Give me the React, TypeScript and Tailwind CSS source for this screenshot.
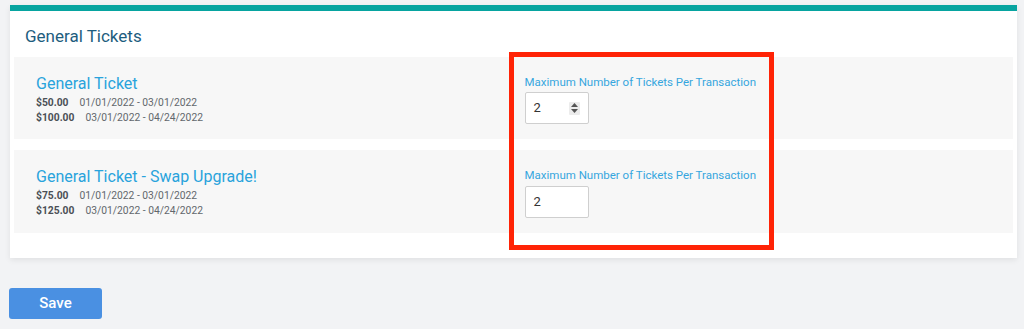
import React from 'react';

interface PriceTier {
  price: string;
  range: string;
}

interface Ticket {
  name: string;
  tiers: PriceTier[];
  maxPerTransaction: number;
  showSpinner: boolean;
}

const tickets: Ticket[] = [
  {
    name: 'General Ticket',
    tiers: [
      { price: '$50.00', range: '01/01/2022 - 03/01/2022' },
      { price: '$100.00', range: '03/01/2022 - 04/24/2022' },
    ],
    maxPerTransaction: 2,
    showSpinner: true,
  },
  {
    name: 'General Ticket - Swap Upgrade!',
    tiers: [
      { price: '$75.00', range: '01/01/2022 - 03/01/2022' },
      { price: '$125.00', range: '03/01/2022 - 04/24/2022' },
    ],
    maxPerTransaction: 2,
    showSpinner: false,
  },
];

const Spinner: React.FC = () => (
  <div className="flex flex-col items-center justify-center gap-[2px] w-[11px] h-[13px] bg-[#ececec] rounded-[1px]">
    <svg width="7" height="4" viewBox="0 0 7 4">
      <path d="M3.5 0 L7 4 L0 4 Z" fill="#555" />
    </svg>
    <svg width="7" height="4" viewBox="0 0 7 4">
      <path d="M0 0 L7 0 L3.5 4 Z" fill="#555" />
    </svg>
  </div>
);

const TicketRow: React.FC<{ ticket: Ticket; last?: boolean }> = ({ ticket, last }) => (
  <div className={`grid grid-cols-2 items-start bg-[#f7f7f7] pt-[17px] ${last ? 'pb-[15px]' : 'pb-[14px]'}`}>
    <div className="pl-[22px]">
      <div className="text-[16px] leading-[19px] text-[#29a3dc]">{ticket.name}</div>
      <div className="mt-[2px] text-[10.3px] leading-[15px]">
        {ticket.tiers.map(tier => (
          <div key={tier.price} className="flex gap-[11px]">
            <span className="font-bold text-[#4b5056]">{tier.price}</span>
            <span className="text-[#62676c]">{tier.range}</span>
          </div>
        ))}
      </div>
    </div>
    <div className="pl-[11px]">
      <div className="text-[11.5px] leading-[16px] text-[#36a6de]">Maximum Number of Tickets Per Transaction</div>
      <div className={`${last ? 'mt-[3px]' : 'mt-[2px]'} flex items-center justify-between w-[64px] h-[32px] bg-white border border-[#cfcfcf] rounded-[2px] pl-[8px] pr-[8px]`}>
        <span className="text-[13px] text-[#333]">{ticket.maxPerTransaction}</span>
        {ticket.showSpinner && <Spinner />}
      </div>
    </div>
  </div>
);

export default function App() {
  return (
    <div className="relative w-[1024px] h-[329px] bg-[#f2f3f5] pt-[5px] font-['Roboto',sans-serif]">
      <div className="ml-[10px] w-[1007px] bg-white border-t-[6px] border-[#07a4a0] shadow-[0_2px_6px_rgba(0,0,0,0.08)] px-[4px] pb-[25px]">
        <div className="pl-[11px] pt-[13px] pb-[9px] text-[17px] leading-[24px] text-[#1d5d7e]">General Tickets</div>
        <div className="flex flex-col gap-[11px]">
          {tickets.map((t, i) => (
            <TicketRow key={t.name} ticket={t} last={i === tickets.length - 1} />
          ))}
        </div>
      </div>

      <button className="mt-[30px] ml-[9px] w-[93px] h-[31px] rounded-[3px] bg-[#4a90e2] text-white text-[15px] font-medium">
        Save
      </button>

      <div className="absolute left-[509px] top-[52px] w-[265px] h-[198px] border-[5px] border-[#ff2306]" />
    </div>
  );
}
